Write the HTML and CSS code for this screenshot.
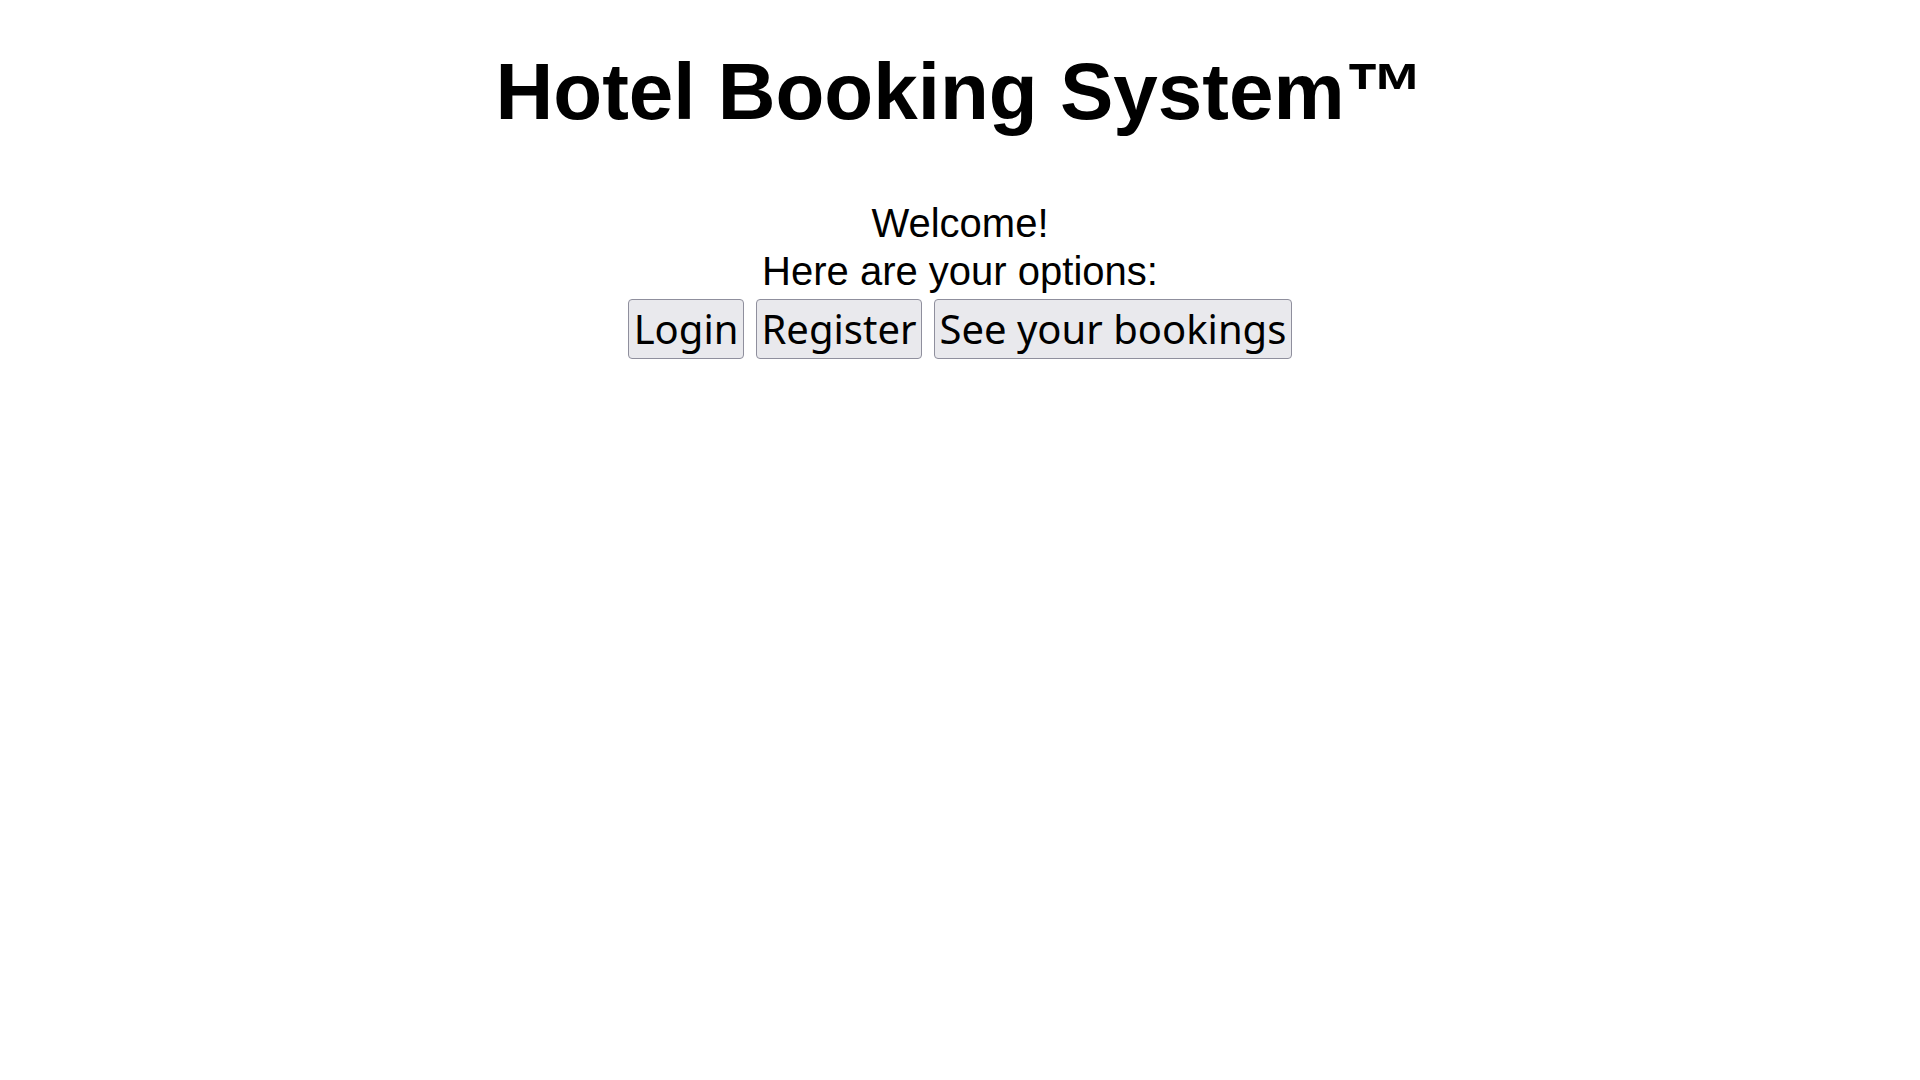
FILE: index.html
```html
<!DOCTYPE html>
<html lang="en">
<head>
<meta charset="utf-8">
<title>Hotel Booking System</title>
<link rel="stylesheet" href="styles.css">
</head>
<body>
<main class="page">
  <h1 class="title">Hotel Booking System™</h1>
  <div class="intro">
    <div class="line">Welcome!</div>
    <div class="line">Here are your options:</div>
  </div>
  <div class="actions">
    <button class="btn" type="button">Login</button>
    <button class="btn" type="button">Register</button>
    <button class="btn" type="button">See your bookings</button>
  </div>
</main>
</body>
</html>
```

FILE: styles.css
```css
html, body {
  margin: 0;
  padding: 0;
  background: #ffffff;
}

body {
  font-family: "Liberation Sans", Arial, sans-serif;
  color: #000000;
}

.page {
  display: flex;
  flex-direction: column;
  align-items: center;
  padding-top: 46px;
}

.title {
  margin: 0;
  font-size: 80px;
  font-weight: bold;
  line-height: 92px;
  text-align: center;
}

.intro {
  margin-top: 61px;
  font-size: 40px;
  line-height: 48px;
  text-align: center;
}

.actions {
  display: flex;
  justify-content: center;
  gap: 12px;
  margin-top: 4px;
}

.btn {
  font-family: "Noto Sans", sans-serif;
  font-size: 40px;
  line-height: 54px;
  color: #000000;
  background: #e9e9ed;
  border: 1px solid #8f8f9d;
  border-radius: 4px;
  padding: 2px 4.5px;
  margin: 0;
}
```
